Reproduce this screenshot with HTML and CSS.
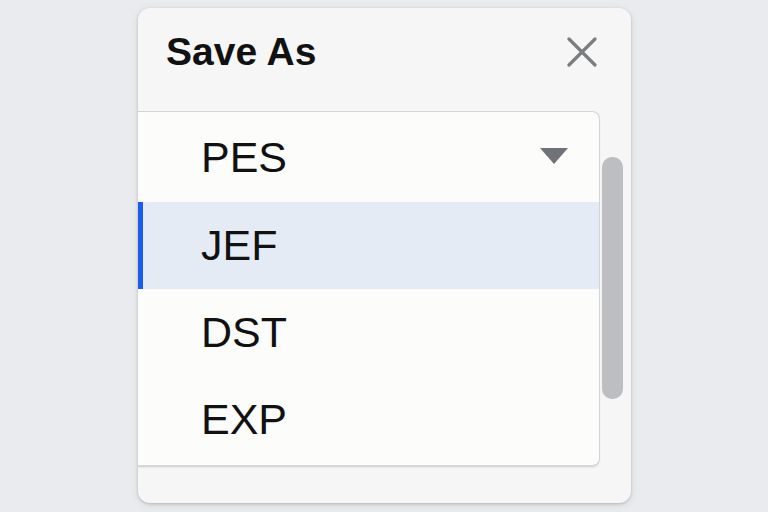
FILE: index.html
```html
<!DOCTYPE html>
<html>
<head>
<meta charset="utf-8">
<link rel="stylesheet" href="styles.css">
</head>
<body>
<div class="dialog">
  <div class="header">
    <h1 class="title">Save As</h1>
    <svg class="close" width="30" height="30" viewBox="0 0 30 30"><path d="M2 2 L28 28 M28 2 L2 28" stroke="#7b7c7e" stroke-width="3.2" stroke-linecap="round"/></svg>
  </div>
  <div class="body">
    <div class="listbox">
      <div class="row first">PES<svg class="caret" width="30" height="18" viewBox="0 0 30 18"><path d="M1 1 L29 1 L15 17 Z" fill="#6f7277"/></svg></div>
      <div class="row selected">JEF</div>
      <div class="row">DST</div>
      <div class="row">EXP</div>
    </div>
    <div class="gutter"><div class="thumb"></div></div>
  </div>
</div>
</body>
</html>
```
FILE: styles.css
```css
html, body {
  margin: 0;
  padding: 0;
}
body {
  background: #e9ebee;
  width: 768px;
  height: 512px;
  overflow: hidden;
  font-family: "Liberation Sans", Arial, sans-serif;
}
.dialog {
  margin: 8px 0 0 138px;
  width: 493px;
  height: 495px;
  background: #f6f6f6;
  border-radius: 12px;
  box-shadow: 0 1px 3px rgba(0,0,0,0.18), 0 2px 10px rgba(0,0,0,0.08);
  display: flex;
  flex-direction: column;
  overflow: hidden;
}
.header {
  height: 103px;
  display: flex;
  align-items: flex-start;
  justify-content: space-between;
  padding: 0 34px 0 28px;
  box-sizing: border-box;
}
.title {
  margin: 18px 0 0 0;
  font-size: 39px;
  font-weight: bold;
  color: #111;
  line-height: 52px;
}
.close {
  margin-top: 29px;
}
.body {
  display: flex;
  align-items: flex-start;
}
.listbox {
  width: 462px;
  background: #fcfcfb;
  border: 1px solid #d3d4d6;
  border-left: none;
  border-bottom: 2px solid #d6d7d9;
  border-radius: 0 8px 8px 0;
  box-sizing: border-box;
  height: 356px;
  box-shadow: 0 1px 2px rgba(0,0,0,0.06);
}
.row {
  height: 87px;
  display: flex;
  align-items: center;
  justify-content: space-between;
  padding: 0 30px 0 63px;
  font-size: 43px;
  color: #111;
}
.row.first {
  height: 90px;
}
.row.first .caret {
  margin-top: -2px;
}
.row.selected {
  background: #e5ebf4;
  box-shadow: inset 5px 0 0 #1a5cf0;
}
.gutter {
  width: 31px;
  padding-left: 2px;
  box-sizing: border-box;
}
.thumb {
  margin-top: 46px;
  width: 21px;
  height: 242px;
  border-radius: 10px;
  background: #bdbec1;
}
```
